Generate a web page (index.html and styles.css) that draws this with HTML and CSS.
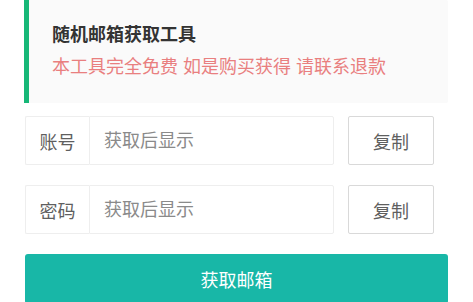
FILE: index.html
```html
<!DOCTYPE html>
<html lang="zh-CN">
<head>
  <meta charset="UTF-8" />
  <meta name="viewport" content="width=device-width, initial-scale=1.0"/>
  <title>随机邮箱获取工具</title>

  <link rel="stylesheet" href="styles.css">
</head>
<body>

  <div class="page">
    <!-- Notice -->
    <blockquote class="quote">
      <div class="quote-title">随机邮箱获取工具</div>
      <div class="quote-tip">本工具完全免费 如是购买获得 请联系退款</div>
    </blockquote>

    <!-- Account -->
    <div class="form-row">
      <div class="input-group">
        <span class="input-prefix">账号</span>
        <input type="text" class="input" id="account" placeholder="获取后显示" readonly>
      </div>
      <button class="btn-copy" type="button">复制</button>
    </div>

    <!-- Password -->
    <div class="form-row">
      <div class="input-group">
        <span class="input-prefix">密码</span>
        <input type="text" class="input" id="password" placeholder="获取后显示" readonly>
      </div>
      <button class="btn-copy" type="button">复制</button>
    </div>

    <button class="btn-main" type="button">获取邮箱</button>
  </div>

</body>
</html>
```

FILE: styles.css
```css
/* Reset & Base */
* {
  margin: 0;
  padding: 0;
  box-sizing: border-box;
}

body, html {
  font-family: "Noto Sans CJK SC", "Noto Sans", sans-serif;
  background-color: #ffffff;
  color: #5f5f5f;
  font-size: 18px;
}

.page {
  padding: 0 25px 0 24px;
}

.quote {
  padding: 20px 20px 25px 23px;
  border-left: 5px solid #16b777;
  background-color: #fafafa;
  border-radius: 0 2px 2px 0;
  margin-bottom: 13px;
}

.quote-title {
  line-height: 26px;
  font-weight: bold;
  color: #333;
}

.quote-tip {
  margin-top: 6px;
  line-height: 26px;
  color: #e97f7f;
  word-spacing: 1px;
}

.form-row {
  display: flex;
  gap: 14px;
  margin-left: 1px;
  margin-right: 14px;
  margin-bottom: 20px;
}

.input-group {
  flex: 1;
  display: flex;
  height: 49px;
}

.input-prefix {
  width: 64px;
  display: flex;
  align-items: center;
  justify-content: center;
  border: 1px solid #eee;
  border-right: none;
  border-radius: 2px 0 0 2px;
  color: #5f5f5f;
}

.input {
  flex: 1;
  min-width: 0;
  border: 1px solid #eee;
  border-radius: 0 2px 2px 0;
  padding: 0 14px 3px;
  font-family: inherit;
  font-size: 18px;
  color: #333;
  outline: none;
}

.input::placeholder {
  color: #8a8a8a;
}

.btn-copy {
  width: 86px;
  height: 49px;
  border: 1px solid #d9d9d9;
  border-radius: 2px;
  background-color: #fff;
  color: #5f5f5f;
  font-family: inherit;
  font-size: 18px;
  cursor: pointer;
}

.btn-main {
  display: block;
  width: calc(100% - 1px);
  margin-left: 1px;
  height: 50px;
  border: none;
  border-radius: 3px;
  background-color: #18b7a7;
  color: #fff;
  font-family: inherit;
  font-size: 18px;
  cursor: pointer;
}
```
